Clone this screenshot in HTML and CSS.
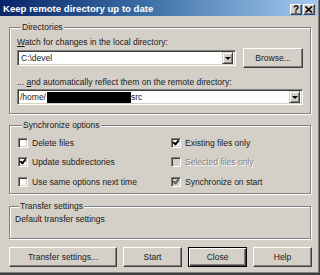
FILE: index.html
```html
<!DOCTYPE html>
<html>
<head>
    <meta name="viewport" content="width=device-width, initial-scale=1">
    <title>Keep remote directory up to date</title>
    <link rel="stylesheet" href="styles.css">
</head>
<body>
    <div class="window">
        <!-- Caption -->
        <div class="titlebar">
            <span class="title">Keep remote directory up to date</span>
            <div class="capButtons">
                <span class="capBtn help">?</span>
                <span class="capBtn close">
                    <svg width="8" height="7" viewBox="0 0 8 7">
                        <path d="M0.5 0.5 L7 6.5 M7 0.5 L0.5 6.5" stroke="#000" stroke-width="1.6"/>
                    </svg>
                </span>
            </div>
        </div>

        <div class="content">
            <fieldset class="group dirs">
                <legend>Directories</legend>
                <div class="fieldLabel"><u>W</u>atch for changes in the local directory:</div>
                <div class="localRow">
                    <div class="combo local">
                        <span class="comboText">C:\devel</span>
                        <span class="dropBtn"></span>
                    </div>
                    <div class="btn browse">Browse...</div>
                </div>
                <div class="fieldLabel second">... <u>a</u>nd automatically reflect them on the remote directory:</div>
                <div class="combo remote">
                    <span class="comboText">/home/<span class="redact"></span>src</span>
                    <span class="dropBtn"></span>
                </div>
            </fieldset>

            <fieldset class="group sync">
                <legend>Synchronize options</legend>
                <div class="checkGrid">
                    <div class="check"><span class="box"></span>Delete files</div>
                    <div class="check"><span class="box on"></span>Existing files only</div>
                    <div class="check"><span class="box on"></span>Update subdirectories</div>
                    <div class="check disabled"><span class="box"></span>Selected files only</div>
                    <div class="check"><span class="box"></span>Use same options next time</div>
                    <div class="check"><span class="box on grey"></span>Synchronize on start</div>
                </div>
            </fieldset>

            <fieldset class="group transfer">
                <legend>Transfer settings</legend>
                <div class="transferText">Default transfer settings</div>
            </fieldset>

            <div class="buttonRow">
                <div class="btn wide">Transfer settings...</div>
                <div class="btn">Start</div>
                <div class="btn default">Close</div>
                <div class="btn">Help</div>
            </div>
        </div>
    </div>
</body>
</html>
```

FILE: styles.css
```css
* {
    box-sizing: border-box;
}

/* No font boosting: keep the pixel sizes as written */
html {
    -webkit-text-size-adjust: none;
    text-size-adjust: none;
}

body {
    margin: 0;
    background-color: #d4d0c8;
    font-family: "Liberation Sans", Arial, sans-serif;
    font-size: 8.5px;
    color: #1a1a1a;
}

u {
    text-decoration: underline;
    text-underline-offset: 1px;
}

/* Window frame */
.window {
    width: 320px;
    height: 275px;
    border-right: 1px solid #404040;
    border-bottom: 2px solid #404040;
    box-shadow: inset -1px -1px 0 #808080;
}

/* Caption bar */
.titlebar {
    height: 16px;
    margin-right: 1px;
    padding-left: 3px;
    display: flex;
    align-items: center;
    justify-content: space-between;
    background: linear-gradient(to right, #0a246a 0%, #3a6ea5 45%, #a6caf0 100%);
    color: #fff;
    font-weight: bold;
    font-size: 9.6px;
}

.capButtons {
    display: flex;
    gap: 1px;
    margin-right: 3px;
    margin-top: 2px;
}

.capBtn {
    width: 12px;
    height: 11px;
    display: flex;
    align-items: center;
    justify-content: center;
    background-color: #d4d0c8;
    color: #000;
    font-size: 10px;
    border-top: 1px solid #fff;
    border-left: 1px solid #fff;
    border-right: 1px solid #404040;
    border-bottom: 1px solid #404040;
    box-shadow: inset -1px -1px 0 #808080;
}

.content {
    padding: 6px 7px 0 9px;
}

/* Group boxes */
.group {
    margin: 0;
    width: 302px;
    border: 1px solid #808080;
    box-shadow: 1px 1px 0 #fff, inset 1px 1px 0 #fff;
}

.group legend {
    padding: 0 1px;
    margin-left: 4px;
    line-height: 10px;
    background-color: #d4d0c8;
}

.dirs {
    height: 92px;
    padding: 5px 7px 0 7px;
}

.sync {
    margin-top: 6px;
    height: 74px;
    padding: 3px 0 0 8px;
}

.transfer {
    margin-top: 7px;
    height: 38px;
    padding: 3px 0 0 5px;
}

.fieldLabel {
    line-height: 11px;
    white-space: nowrap;
}

.fieldLabel.second {
    margin-top: 9px;
}

.localRow {
    height: 20px;
    display: flex;
    align-items: center;
    gap: 7px;
}

/* Combo boxes */
.combo {
    height: 16px;
    display: flex;
    align-items: center;
    justify-content: space-between;
    background-color: #fff;
    border-top: 1px solid #808080;
    border-left: 1px solid #808080;
    border-right: 1px solid #fff;
    border-bottom: 1px solid #fff;
    box-shadow: inset 1px 1px 0 #404040, inset -1px -1px 0 #d4d0c8;
    padding: 0 2px 0 3px;
}

.combo.local {
    width: 219px;
}

.combo.remote {
    width: 286px;
    margin-top: 1px;
    padding-left: 2px;
}

.comboText {
    display: flex;
    align-items: center;
    white-space: nowrap;
}

.redact {
    display: inline-block;
    width: 84px;
    height: 11px;
    margin-left: 1px;
    background-color: #000;
}

.dropBtn {
    width: 11px;
    height: 12px;
    position: relative;
    background-color: #d4d0c8;
    border-top: 1px solid #d4d0c8;
    border-left: 1px solid #d4d0c8;
    border-right: 1px solid #404040;
    border-bottom: 1px solid #404040;
    box-shadow: inset 1px 1px 0 #fff, inset -1px -1px 0 #808080;
}

/* small arrow of the drop-down button */
.dropBtn::after {
    content: "";
    position: absolute;
    left: 2px;
    top: 4px;
    border-left: 3px solid transparent;
    border-right: 3px solid transparent;
    border-top: 3px solid #000;
}

/* Push buttons */
.btn {
    height: 20px;
    width: 59px;
    display: flex;
    align-items: center;
    justify-content: center;
    background-color: #d4d0c8;
    border-top: 1px solid #fff;
    border-left: 1px solid #fff;
    border-right: 1px solid #404040;
    border-bottom: 1px solid #404040;
    box-shadow: inset -1px -1px 0 #808080;
}

.btn.browse {
    width: 60px;
}

.btn.wide {
    width: 108px;
}

.btn.default {
    border: 1px solid #000;
    box-shadow: inset 1px 1px 0 #fff, inset -1px -1px 0 #404040, inset -2px -2px 0 #808080;
}

.buttonRow {
    margin-top: 8px;
    display: flex;
    gap: 6px;
}

/* Check boxes */
.checkGrid {
    display: grid;
    grid-template-columns: 153px 1fr;
    grid-auto-rows: 19.5px;
}

.check {
    display: flex;
    align-items: center;
    white-space: nowrap;
}

.box {
    width: 10px;
    height: 10px;
    margin-right: 4px;
    position: relative;
    background-color: #fff;
    border-top: 1px solid #808080;
    border-left: 1px solid #808080;
    border-right: 1px solid #fff;
    border-bottom: 1px solid #fff;
    box-shadow: inset 1px 1px 0 #404040, inset -1px -1px 0 #d4d0c8;
}

.box.on::after {
    content: "";
    position: absolute;
    left: 2px;
    top: 0px;
    width: 2px;
    height: 4px;
    border-right: 2px solid #000;
    border-bottom: 2px solid #000;
    transform: rotate(40deg);
}

.box.grey {
    background-color: #d4d0c8;
}

.box.grey::after {
    border-color: #606060;
}

.check.disabled {
    color: #808080;
    text-shadow: 1px 1px 0 #fff;
}

.check.disabled .box {
    background-color: #d4d0c8;
}

.transferText {
    line-height: 11px;
}
```
